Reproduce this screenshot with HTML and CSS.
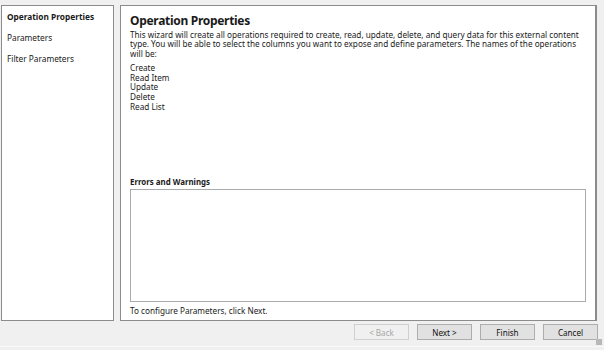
FILE: index.html
```html
<!DOCTYPE html>
<html lang="en">
<head>
    <meta charset="UTF-8">
    <title>Operation Properties</title>
    <link rel="stylesheet" href="styles.css">
</head>
<body>
    <div class="wizard">
        <div class="main">
            <ul class="steps">
                <li class="step active">Operation Properties</li>
                <li class="step">Parameters</li>
                <li class="step">Filter Parameters</li>
            </ul>
            <div class="page">
                <h1>Operation Properties</h1>
                <p class="intro">This wizard will create all operations required to create, read, update, delete, and query data for this external content type. You will be able to select the columns you want to expose and define parameters. The names of the operations will be:</p>
                <ul class="ops">
                    <li>Create</li>
                    <li>Read Item</li>
                    <li>Update</li>
                    <li>Delete</li>
                    <li>Read List</li>
                </ul>
                <div class="spacer"></div>
                <h2>Errors and Warnings</h2>
                <div class="errors"></div>
                <p class="hint">To configure Parameters, click Next.</p>
            </div>
        </div>
        <div class="buttons">
            <button disabled>&lt; Back</button>
            <button>Next &gt;</button>
            <button>Finish</button>
            <button>Cancel</button>
        </div>
        <div class="grip"></div>
    </div>
</body>
</html>
```
FILE: styles.css
```css
body {
    margin: 0;
    background: #f0f0f0;
    font-family: "Noto Sans", "Open Sans", sans-serif;
    font-size: 8.2px;
    color: #1a1a1a;
    overflow: hidden;
}
.wizard {
    height: 346px;
    display: flex;
    flex-direction: column;
    border-bottom: 1px solid #f9f9f9;
    position: relative;
}
.main {
    display: flex;
    gap: 6px;
    padding: 5px 7px 0 1px;
    height: 316px;
}
.steps {
    list-style: none;
    margin: 0;
    padding: 5px 5px;
    width: 113px;
    box-sizing: border-box;
    background: #fff;
    border: 1px solid #8c8c8c;
    font-size: 8.3px;
}
.step {
    height: 21px;
    line-height: 12px;
}
.step.active {
    font-weight: bold;
}
.page {
    flex: 1;
    display: flex;
    flex-direction: column;
    background: #fff;
    border: 1px solid #8c8c8c;
    border-right: 2px solid #8a8a8a;
    padding: 7px 9px 4px 9px;
}
h1 {
    margin: 0;
    font-size: 12px;
    letter-spacing: -0.3px;
    line-height: 15px;
}
.intro {
    margin: 2px 0 5px;
    padding-right: 6px;
    line-height: 9.3px;
}
.ops {
    list-style: none;
    margin: 0;
    padding: 0;
    line-height: 9.8px;
}
.spacer {
    flex: 1;
}
h2 {
    margin: 0 0 1px;
    font-size: 7.9px;
    line-height: 11px;
}
.errors {
    height: 111px;
    border: 1px solid #a9abae;
    background: #fff;
}
.hint {
    margin: 3px 0 0;
    line-height: 11px;
}
.buttons {
    display: flex;
    justify-content: flex-end;
    gap: 8px;
    padding: 3px 6px 0 0;
}
button {
    width: 55px;
    height: 16px;
    padding: 0;
    font-family: inherit;
    font-size: 8.1px;
    color: #111;
    background: #e1e1e1;
    border: 1px solid #adadad;
}
button:disabled {
    color: #a6a6a6;
    background: #f0f0f0;
    border-color: #d0d0d0;
}
.grip {
    position: absolute;
    right: 2px;
    bottom: 1px;
    width: 6px;
    height: 6px;
    background: radial-gradient(circle, #b8b8b8 0.8px, transparent 1px) 0 0 / 2px 2px;
}
```
